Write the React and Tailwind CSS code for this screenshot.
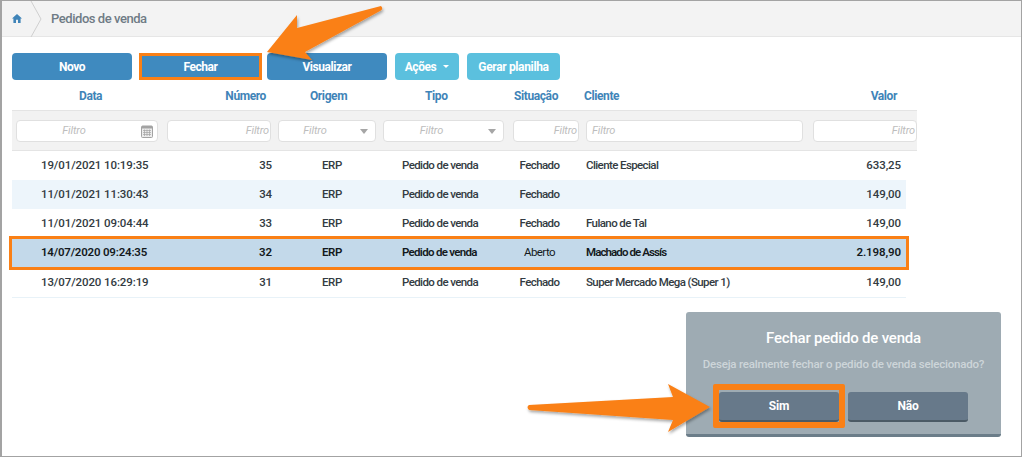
const font = { fontFamily: 'Roboto, "Liberation Sans", sans-serif' }
const cols = 'grid grid-cols-[151px_112px_105px_129px_73px_227px_97px]'
const headCols = 'grid grid-cols-[151px_112px_105px_129px_73px_227px_108px]'
const orange = 'border-[#fa8016]'

const rows = [
  { data: '19/01/2021 10:19:35', numero: '35', tipo: 'Pedido de venda', situacao: 'Fechado', cliente: 'Cliente Especial', valor: '633,25' },
  { data: '11/01/2021 11:30:43', numero: '34', tipo: 'Pedido de venda', situacao: 'Fechado', cliente: '', valor: '149,00', striped: true },
  { data: '11/01/2021 09:04:44', numero: '33', tipo: 'Pedido de venda', situacao: 'Fechado', cliente: 'Fulano de Tal', valor: '149,00' },
  { data: '14/07/2020 09:24:35', numero: '32', tipo: 'Pedido de venda', situacao: 'Aberto', cliente: 'Machado de Assís', valor: '2.198,90', selected: true },
  { data: '13/07/2020 16:29:19', numero: '31', tipo: 'Pedido de venda', situacao: 'Fechado', cliente: 'Super Mercado Mega (Super 1)', valor: '149,00' },
]

function FilterBox({ width, align = 'right', icon, caret }) {
  return (
    <div className={`${width} h-[22px] bg-white border border-[#e0e0e0] rounded flex items-center text-[11px] italic text-[#bdbdbd] tracking-[-0.15px] relative ${align === 'right' ? 'justify-end pr-[1px]' : align === 'left' ? 'pl-[5px]' : 'justify-center'}`}>
      <span className={`pt-[2px] ${caret ? 'mr-[24px]' : icon ? 'mr-[26px]' : ''}`}>Filtro</span>
      {caret && <span className="absolute right-[7px] top-[8px] w-0 h-0 border-x-[4px] border-x-transparent border-t-[5px] border-t-[#a6a6a6]" />}
      {icon && (
        <svg className="absolute right-[4px] top-[4px]" width="12" height="13" viewBox="0 0 12 13">
          <rect x="0.5" y="1" width="11" height="11.5" rx="1" fill="#ececec" stroke="#a3a3a3" />
          <rect x="1" y="1" width="10" height="2.5" fill="#a3a3a3" />
          <path d="M2 5.5h8M2 7.5h8M2 9.5h8M3.5 4.5v6.5M6 4.5v6.5M8.5 4.5v6.5" stroke="#a3a3a3" strokeWidth="0.7" />
        </svg>
      )}
    </div>
  )
}

export default function App() {
  return (
    <div style={font} className="w-[1024px] h-[458px] bg-white relative overflow-hidden">
      <div className="h-[457px] w-[1022px] border-l-2 border-t border-b border-r border-[#a3a3a3]">
        <div className="h-[36px] bg-[#f3f3f3] border-b border-[#e6e6e6] flex items-center relative">
          <svg className="ml-[10px]" width="10" height="9" viewBox="0 0 10 9">
            <path d="M5 0 L10 4.6 L8.6 4.6 L8.6 9 L6 9 L6 5.8 L4 5.8 L4 9 L1.4 9 L1.4 4.6 L0 4.6 Z" fill="#3f84b8" />
          </svg>
          <svg className="absolute left-[27px] top-0" width="14" height="36" viewBox="0 0 14 36">
            <path d="M2 0 L12 18 L2 36" fill="none" stroke="#cfcfcf" />
          </svg>
          <span className="ml-[29px] text-[13px] font-medium text-[#6f7b85] tracking-[-0.45px]">Pedidos de venda</span>
        </div>

        <div className="pl-[10px] pt-[16px]">
          <div className="flex items-center h-[27px] text-white text-[12px] font-bold tracking-[-0.45px]">
            <button className="w-[120px] h-[27px] bg-[#3f8abf] rounded">Novo</button>
            <button className={`ml-[7px] w-[123px] h-[27px] bg-[#3f8abf] border-[3px] ${orange}`}>Fechar</button>
            <button className="ml-[5px] w-[120px] h-[27px] bg-[#3f8abf] rounded">Visualizar</button>
            <button className="ml-[8px] w-[64px] h-[27px] bg-[#5bc0de] rounded flex items-center justify-center gap-[7px]">
              Ações
              <span className="w-0 h-0 border-x-[3px] border-x-transparent border-t-[3px] border-t-white" />
            </button>
            <button className="ml-[8px] w-[93px] h-[27px] bg-[#5bc0de] rounded tracking-[-0.35px]">Gerar planilha</button>
          </div>

          <div className={`${headCols} w-[905px] h-[30px] pt-[2px] items-center text-[12px] font-bold text-[#3f84b8] tracking-[-0.4px]`}>
            <div className="pl-[67px]">Data</div>
            <div className="text-right pr-[9px]">Número</div>
            <div className="pl-[35px]">Origem</div>
            <div className="pl-[45px]">Tipo</div>
            <div className="pl-[5px]">Situação</div>
            <div className="pl-[2px]">Cliente</div>
            <div className="text-right pr-[20px]">Valor</div>
          </div>

          <div className="w-[905px] h-[41px] bg-[#f2f2f2] border-y border-[#e4e4e4] flex items-center">
            <div className={`${headCols} w-full`}>
              <div className="pl-[4px]"><FilterBox width="w-[142px]" align="center" icon /></div>
              <div className="pl-[4px]"><FilterBox width="w-[104px]" /></div>
              <div className="pl-[3px]"><FilterBox width="w-[98px]" align="center" caret /></div>
              <div className="pl-[3px]"><FilterBox width="w-[121px]" align="center" caret /></div>
              <div className="pl-[4px]"><FilterBox width="w-[66px]" /></div>
              <div className="pl-[4px]"><FilterBox width="w-[217px]" align="left" /></div>
              <div className="pl-[4px]"><FilterBox width="w-[104px]" /></div>
            </div>
          </div>

          <div className="w-[894px] border-b border-[#e8f2f8] text-[11.5px] font-medium text-[#333b42] tracking-[-0.1px]">
            {rows.map(row => (
              <div
                key={row.numero}
                className={`${cols} items-center relative ${row.selected ? 'h-[30px] bg-[#c3d9ea] text-[#14191d] font-semibold' : 'h-[29px]'} ${row.striped ? 'bg-[#edf5fb]' : ''}`}
              >
                <div className={`pl-[29px] ${row.selected ? 'tracking-[-0.2px]' : ''}`}>{row.data}</div>
                <div className="text-right pr-[3px]">{row.numero}</div>
                <div className="pl-[47px] tracking-[-0.4px]">ERP</div>
                <div className={`pl-[22px] ${row.selected ? 'tracking-[-0.7px]' : 'tracking-[-0.6px]'}`}>{row.tipo}</div>
                <div className={`text-center pr-[12px] tracking-[-0.6px] ${row.selected ? 'font-normal' : ''}`}>{row.situacao}</div>
                <div className={`pl-[4px] ${row.selected ? 'tracking-[-0.9px]' : 'tracking-[-0.6px]'}`}>{row.cliente}</div>
                <div className="text-right pr-[5px]">{row.valor}</div>
                {row.selected && <div className={`absolute -left-[3px] -right-[3px] -top-[2px] -bottom-[2px] border-[3px] ${orange}`} />}
              </div>
            ))}
          </div>
        </div>
      </div>

      <div className="absolute left-[686px] top-[312px] w-[315px] h-[125px] bg-[#9eabb3] border-b-[3px] border-[#6b7d89] rounded-[3px] flex flex-col items-center">
        <div className="mt-[17px] h-[19px] leading-[19px] text-[15px] font-medium text-white tracking-[-0.2px]">Fechar pedido de venda</div>
        <div className="mt-[8px] h-[16px] leading-[16px] text-[11.5px] font-medium text-[#cdd5d9] tracking-[-0.2px]">Deseja realmente fechar o pedido de venda selecionado?</div>
        <div className="mt-[20px] flex gap-[9px] text-[12px] font-bold text-white tracking-[-0.2px]">
          <button className="w-[120px] h-[30px] bg-[#67798a] border-b-[2px] border-[#4b5a65] rounded-[3px]">Sim</button>
          <button className="w-[120px] h-[30px] bg-[#67798a] border-b-[2px] border-[#4b5a65] rounded-[3px]">Não</button>
        </div>
      </div>
      <div className={`absolute left-[713px] top-[384px] w-[132px] h-[44px] border-[6px] ${orange} rounded-[2px]`} />

      <svg className="absolute inset-0 pointer-events-none" width="1024" height="458" viewBox="0 0 1024 458">
        <defs>
          <filter id="arrowShadow" x="-10%" y="-20%" width="120%" height="150%">
            <feDropShadow dx="1" dy="2" stdDeviation="1.5" floodColor="#000000" floodOpacity="0.35" />
          </filter>
        </defs>
        <path d="M381 6 Q384 9 380 11 L305 52 L312 60 L267 52 L297 15 L297 28 Z" fill="#fa8016" filter="url(#arrowShadow)" />
        <path d="M529 405 L673 397 L668 384 L710 407 L668 432 L673 420 L529 410 Q526 407 529 405 Z" fill="#fa8016" filter="url(#arrowShadow)" />
      </svg>
    </div>
  )
}
